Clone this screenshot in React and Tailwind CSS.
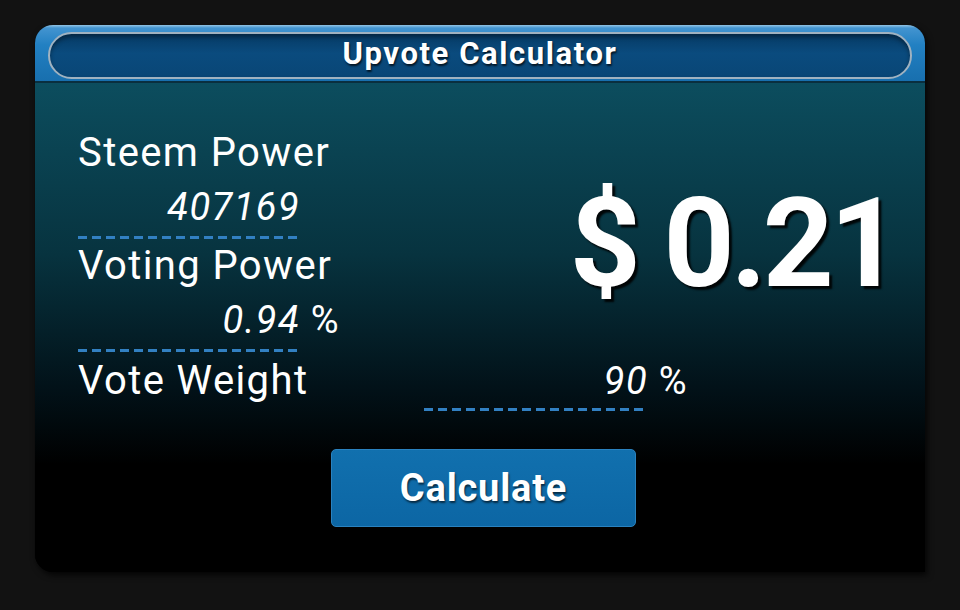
import React from "react";

const Dash = ({ w }) => (
  <div
    className={`h-[3px] bg-[repeating-linear-gradient(90deg,#3280c2_0_9px,transparent_9px_14px)] ${w}`}
  />
);

export default function App() {
  return (
    <div className="w-[960px] h-[610px] bg-[#121212] pt-[25px] pl-[35px] font-['Roboto',sans-serif] overflow-hidden">
      <div className="w-[890px] h-[547px] rounded-tl-[18px] rounded-tr-[18px] rounded-bl-[18px] overflow-hidden flex flex-col shadow-[2px_3px_6px_rgba(0,0,0,0.8)] bg-black">
        {/* header */}
        <div className="h-[58px] shrink-0 bg-[linear-gradient(180deg,#93c4e4_0px,#4394d0_3px,#2280c2_20px,#186fae_100%)] px-[13px] pt-[7px] pb-[3px] border-b-2 border-[#0a2f3f]">
          <div className="h-[47px] rounded-full border-2 border-[#a0b2c0] bg-[linear-gradient(180deg,#063a64_0%,#0a4b7e_45%,#094676_100%)] shadow-[inset_0_3px_4px_rgba(0,0,0,0.35)] flex items-center justify-center">
            <span className="text-white font-bold text-[31px] tracking-[1.6px] [text-shadow:1px_2px_2px_rgba(0,0,0,0.7)] -mt-[2px]">
              Upvote Calculator
            </span>
          </div>
        </div>
        {/* body */}
        <div className="flex-1 bg-[linear-gradient(180deg,#0c4d5e_0%,#07333f_35%,#021219_62%,#000_78%)] flex flex-col pl-[43px] pt-[48px] text-white">
          <div className="flex">
            <div className="w-[265px] flex flex-col">
              <div className="h-[44px] leading-[44px] text-[40px] tracking-[1.4px] whitespace-nowrap">Steem Power</div>
              <div className="w-[222px] h-[61px] pt-[3px] leading-[58px] text-[38px] tracking-[1.4px] italic text-right">407169</div>
              <Dash w="w-[222px]" />
              <div className="h-[44px] mt-[5px] leading-[44px] text-[40px] tracking-[1.4px] whitespace-nowrap">Voting Power</div>
              <div className="w-[222px] h-[61px] pt-[3px] leading-[58px] text-[38px] tracking-[1.4px] flex justify-end">
                <span className="italic">0.94</span>
                <span className="w-0 whitespace-nowrap">&nbsp;%</span>
              </div>
              <Dash w="w-[222px]" />
            </div>
            <div className="flex-1 flex justify-end pr-[28px] pt-[51px]">
              <span className="text-[124px] leading-[124px] font-bold tracking-[-4px] [text-shadow:3px_3px_2px_rgba(0,0,0,0.9)]">
                $ 0.21
              </span>
            </div>
          </div>
          <div className="flex mt-[7px]">
            <div className="w-[346px] h-[44px] leading-[44px] text-[40px] tracking-[1.4px] whitespace-nowrap">Vote Weight</div>
            <div className="flex flex-col">
              <div className="w-[224px] h-[44px] leading-[44px] text-[38px] tracking-[1.4px] flex justify-end">
                <span className="italic">90</span>
                <span className="w-0 whitespace-nowrap">&nbsp;%</span>
              </div>
              <div className="mt-[5px]">
                <Dash w="w-[224px]" />
              </div>
            </div>
          </div>
          <div className="mt-[38px] ml-[253px]">
            <button className="w-[305px] h-[78px] rounded-[5px] border border-[#2a82bf] bg-[linear-gradient(180deg,#1170ae_0%,#0c66a4_100%)] text-white font-bold text-[38px] tracking-[0.8px] [text-shadow:1px_2px_2px_rgba(0,0,0,0.6)]">
              Calculate
            </button>
          </div>
        </div>
      </div>
    </div>
  );
}
